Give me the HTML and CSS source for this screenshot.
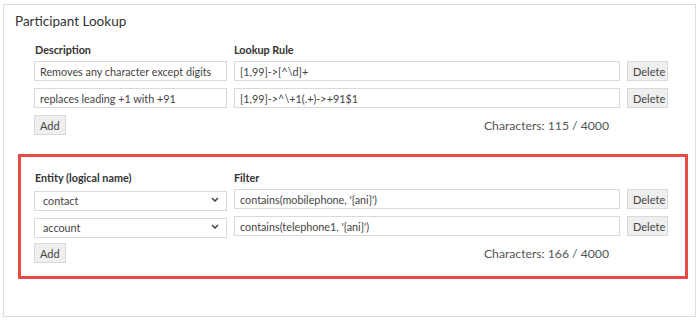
FILE: index.html
```html
<!DOCTYPE html>
<html lang="en">

<head>
    <meta charset="UTF-8">
    <meta name="viewport" content="width=device-width, initial-scale=1.0">
    <title>Participant Lookup</title>
    <link rel="stylesheet" href="styles.css">
</head>

<body>
    <div class="panel">
        <div class="panel-title">Participant Lookup</div>

        <!-- lookup rules -->
        <div class="section">
            <div class="row head">
                <div>Description</div>
                <div>Lookup Rule</div>
            </div>
            <div class="row">
                <input type="text" class="field" value="Removes any character except digits">
                <input type="text" class="field" value="[1,99]->[^\d]+">
                <button class="btn">Delete</button>
            </div>
            <div class="row">
                <input type="text" class="field" value="replaces leading +1 with +91">
                <input type="text" class="field" value="[1,99]->^\+1(.+)->+91$1">
                <button class="btn">Delete</button>
            </div>
            <div class="row foot">
                <div class="foot-left"><button class="btn">Add</button></div>
                <div class="count">Characters: 115 / 4000</div>
            </div>
        </div>

        <!-- entity filters -->
        <div class="section marked">
            <div class="row head">
                <div>Entity (logical name)</div>
                <div>Filter</div>
            </div>
            <div class="row">
                <div class="select-wrap">
                    <select class="field select">
                        <option>contact</option>
                    </select>
                    <svg class="chevron" width="8" height="5" viewBox="0 0 8 5"><path d="M1 1 L4 4 L7 1" fill="none" stroke="#444" stroke-width="1.5"/></svg>
                </div>
                <input type="text" class="field" value="contains(mobilephone, '{ani}')">
                <button class="btn">Delete</button>
            </div>
            <div class="row">
                <div class="select-wrap">
                    <select class="field select">
                        <option>account</option>
                    </select>
                    <svg class="chevron" width="8" height="5" viewBox="0 0 8 5"><path d="M1 1 L4 4 L7 1" fill="none" stroke="#444" stroke-width="1.5"/></svg>
                </div>
                <input type="text" class="field" value="contains(telephone1, '{ani}')">
                <button class="btn">Delete</button>
            </div>
            <div class="row foot">
                <div class="foot-left"><button class="btn">Add</button></div>
                <div class="count">Characters: 166 / 4000</div>
            </div>
        </div>
    </div>
</body>

</html>
```

FILE: styles.css
```css
/* Base */
body {
    margin: 0;
    font-family: Lato, "Open Sans", sans-serif;
    color: #444;
    background-color: #fff;
}

/* Panel */
.panel {
    box-sizing: border-box;
    height: 313px;
    margin: 4px 4px 0 3px;
    border: 1px solid #dcdcdc;
}

.panel-title {
    padding: 6px 0 0 11px;
    font-size: 13.5px;
    line-height: 20px;
    height: 20px;
    margin-bottom: -5px;
    color: #333;
}

/* Sections */
.section {
    display: flex;
    flex-direction: column;
    gap: 7px;
    margin: 0 7px 3px 14px;
    padding: 13px 16px 13px 13px;
    border: 3px solid transparent;
}

.section.marked {
    border-color: #ea4a45;
}

.row {
    display: grid;
    grid-template-columns: 193px 386px 41px;
    column-gap: 7px;
    align-items: center;
    height: 20px;
}

.row.head {
    font-size: 10.8px;
    font-weight: 700;
    line-height: 16px;
    height: 16px;
    color: #333;
    margin-bottom: -4px;
}

.row.head div:first-child {
    padding-left: 1px;
}

.foot-left {
    display: flex;
}

.row.foot .count {
    text-align: right;
    padding-right: 11px;
    font-size: 12.2px;
    color: #555;
}

/* Inputs */
.field {
    box-sizing: border-box;
    width: 100%;
    height: 20px;
    margin: 0;
    padding: 0 5px;
    font-family: inherit;
    font-size: 10.8px;
    color: #444;
    background: #fff;
    border: 1px solid #d9d9d9;
    border-radius: 0;
    outline: none;
}

.select-wrap {
    position: relative;
    height: 20px;
}

.select {
    appearance: none;
    -webkit-appearance: none;
    padding-left: 8px;
}

.chevron {
    position: absolute;
    right: 8px;
    top: 8px;
    pointer-events: none;
}

/* Buttons */
.btn {
    box-sizing: border-box;
    height: 20px;
    padding: 0 5px;
    font-family: inherit;
    font-size: 11px;
    color: #444;
    background-color: #efefef;
    border: 1px solid #d9d9d9;
    border-radius: 0;
    cursor: pointer;
}

.btn:hover {
    background-color: #e4e4e4;
}
```
